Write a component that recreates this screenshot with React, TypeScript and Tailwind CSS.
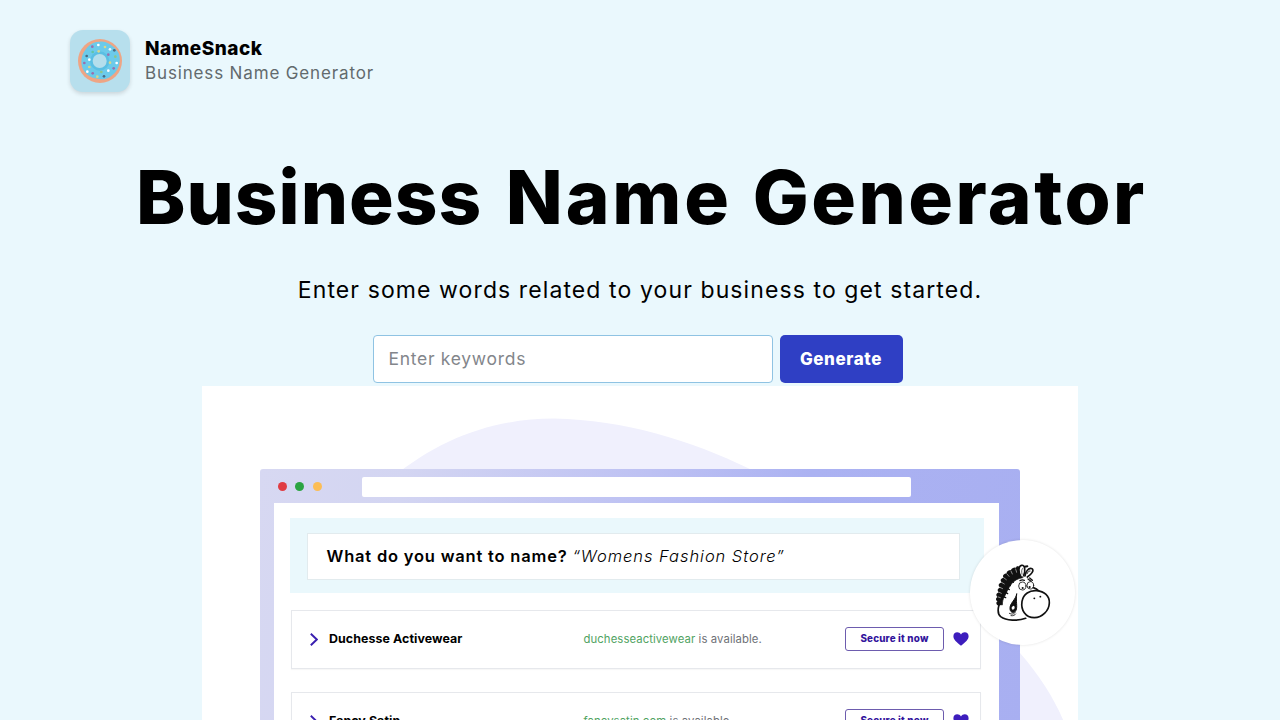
import React from "react";

type Result = { name: string; domain: string };

const RESULTS: Result[] = [
  { name: "Duchesse Activewear", domain: "duchesseactivewear" },
  { name: "Fancy Satin", domain: "fancysatin.com" },
];

const SPRINKLES: [number, number, string][] = [
  [97, 57, "#ffffff"], [79, 62, "#9a6fae"], [117, 63, "#d8d88a"], [132, 70, "#e8f7ff"],
  [145, 73, "#4b6a82"], [98, 76, "#d8d88a"], [80, 78, "#62c4a6"], [127, 86, "#9a6fae"],
  [62, 90, "#4b6a82"], [70, 101, "#ffffff"], [148, 92, "#8cc68a"], [152, 111, "#ffffff"],
  [132, 110, "#d8d88a"], [55, 111, "#9a6fae"], [70, 123, "#d8d88a"], [143, 127, "#9a6fae"],
  [64, 137, "#ffffff"], [80, 142, "#9a6fae"], [106, 138, "#8cc68a"], [127, 134, "#ffffff"],
  [94, 152, "#d8d88a"], [114, 151, "#4b6a82"],
];

const MANE: [number, number][] = [
  [83, 27], [70, 31], [57, 38], [46, 48], [39, 61], [33, 75], [30, 90], [26, 104], [25, 117], [26, 129],
];

function DonutLogo() {
  return (
    <svg className="h-full w-full" viewBox="12 12 180 186" aria-hidden="true">
      <circle cx="102" cy="105" r="66" fill="#eea585" />
      <path
        d="M101 47c18-3 32 8 43 17 14 12 19 26 17 44-2 17-10 31-24 41-13 10-24 13-39 10-17-2-31-7-41-20-11-14-12-28-10-43 2-12 9-22 17-32 9-11 22-17 37-17z"
        fill="#6ccaea"
      />
      <circle cx="101" cy="105" r="29" fill="#5abfe3" />
      <circle cx="101" cy="105" r="21" fill="#b4deec" />
      {SPRINKLES.map(([x, y, fill]) => (
        <circle key={`${x}-${y}`} cx={x} cy={y} r="4" fill={fill} />
      ))}
    </svg>
  );
}

function Zebra() {
  return (
    <svg className="h-[66px] w-16" viewBox="1 0 192 198" fill="none" stroke="#111" strokeLinecap="round" strokeLinejoin="round" aria-hidden="true">
      {/* mane */}
      <path
        d="M88 24C60 30 42 50 34 80 30 98 26 116 27 133l8 2c0-10 2-18 7-26 6-13 12-27 21-38 8-10 20-16 33-18z"
        fill="#111"
        strokeWidth="2"
      />
      {MANE.map(([x, y]) => (
        <ellipse key={`${x}-${y}`} cx={x} cy={y} rx="9" ry="7.5" fill="#111" stroke="none" transform={`rotate(-25 ${x} ${y})`} />
      ))}
      <path d="M75 27l3 10M61 33l4 9M49 42l6 7M40 54l7 5M34 68l7 4M29 83l7 3M26 97l6 3M23 111l6 2" stroke="#fff" strokeWidth="1.5" />
      {/* neck stripes */}
      <path d="M51 69l8 8M46 82l10 7M41 95l10 6M61 58l7 9M36 109l9 4" strokeWidth="4" />
      {/* ears */}
      <path d="M91 50c-9-12-8-32 2-34 10-2 12 16 6 31" fill="#fff" strokeWidth="5" />
      <path d="M94 43c-2-9-1-16 2-18" strokeWidth="2" />
      <path d="M103 48c1-13 11-26 21-22 8 5-3 18-14 25" fill="#fff" strokeWidth="5" />
      <path d="M109 41c3-6 6-8 9-8" strokeWidth="3" />
      <path d="M80 22l4 20M102 20l8-1" strokeWidth="6" />
      {/* brow */}
      <path d="M88 62c5-3 9-3 13-1M112 57l9 7M117 54l8 7" strokeWidth="4" />
      {/* eyes */}
      <ellipse cx="95" cy="78" rx="11" ry="12" fill="#fff" strokeWidth="2.5" />
      <ellipse cx="119" cy="76" rx="10" ry="11" fill="#fff" strokeWidth="2.5" />
      <circle cx="96" cy="84" r="3.2" fill="#111" stroke="none" />
      <circle cx="117" cy="81" r="3.2" fill="#111" stroke="none" />
      <path d="M128 83c7 2 12 5 17 10" strokeWidth="5" />
      {/* jaw */}
      <path d="M25 135c-4 14-3 28 5 35 16 12 52 14 75 5" strokeWidth="5" />
      {/* mouth */}
      <path d="M78 102c-2 17-22 28-20 45 1 12 13 14 18 4 5-11-1-27 2-49z" fill="#111" strokeWidth="3" />
      <path d="M70 137c-8 2-9 8-4 12 6-1 8-7 4-12z" fill="#fff" stroke="none" />
      <path d="M56 160c8 4 15 3 18-4M61 167c7 1 11-1 14-5" strokeWidth="2.5" />
      {/* muzzle */}
      <path d="M94 124c4-22 23-34 44-32 23 2 39 16 38 37-1 23-21 44-45 44-27 0-41-23-37-49z" fill="#fff" strokeWidth="5" />
      <circle cx="131" cy="115" r="2.8" fill="#111" stroke="none" />
      <circle cx="149" cy="110" r="2.8" fill="#111" stroke="none" />
    </svg>
  );
}

function Chevron() {
  return (
    <svg className="h-[13px] w-2" viewBox="0 0 8 13" fill="none" stroke="#3a1fb0" strokeWidth="1.9" aria-hidden="true">
      <path d="M.8 .8L6.8 6.5L.8 12.2" />
    </svg>
  );
}

function Heart() {
  return (
    <svg className="mb-px ml-[9px] h-[14px] w-4" viewBox="0 0 16 14" fill="#3d1dbd" aria-hidden="true">
      <path d="M8 13.800C3.600 10.200.4 7.700.4 4.300.4 1.900 2.100.3 4.200.3 5.800.3 7.200 1.100 8 2.500 8.800 1.100 10.200.3 11.800.3c2.100 0 3.800 1.600 3.800 4 0 3.400-3.200 5.900-7.600 9.500z" />
    </svg>
  );
}

function ResultRow({ name, domain }: Result) {
  return (
    <div className="flex h-[59px] w-[690px] shrink-0 items-center border border-[#e6e8ec] bg-white pl-[18px] shadow-[0_1px_1px_rgba(0,0,0,0.03)]">
      <Chevron />
      <div className="ml-[11px] w-[254.5px] text-[12.4px] font-bold tracking-[0.08px] text-black">{name}</div>
      <div className="w-[261.5px] whitespace-nowrap text-[11.3px] tracking-[0.1px] text-[#6f7177]">
        <span className="text-[#51a362]">{domain}</span> is available.
      </div>
      <div className="mb-px flex h-6 w-[99px] items-center justify-center rounded-[3px] border border-[#6d5cae] pt-px text-[9.8px] font-extrabold tracking-[0.2px] whitespace-nowrap text-[#32149c]">
        Secure it now
      </div>
      <Heart />
    </div>
  );
}

function BrowserMockup() {
  return (
    <div className="flex h-[300px] w-[760px] shrink-0 flex-col rounded-t-[3px] bg-[linear-gradient(100deg,#d7d8f2_0%,#d3d5f2_18%,#bdc1f3_48%,#abb2f2_68%,#a8aff1_100%)]">
      <div className="flex h-[33.5px] shrink-0 items-center pt-0.5 pl-[17.5px]">
        <div className="flex w-[84px] gap-[8.7px]">
          <span className="h-[9px] w-[9px] rounded-full bg-[#e03c43]" />
          <span className="h-[9px] w-[9px] rounded-full bg-[#2ba442]" />
          <span className="h-[9px] w-[9px] rounded-full bg-[#fcbd55]" />
        </div>
        <div className="h-[19.5px] w-[549px] rounded-[2px] bg-white" />
      </div>
      <div className="ml-[13.5px] flex w-[725px] grow flex-col overflow-hidden bg-white pt-[15px] pl-[16.5px]">
        <div className="flex h-[75px] w-[693.5px] shrink-0 items-center bg-[#eaf8fc] pt-0.5 pl-[17px]">
          <div className="flex h-[47px] w-[653px] items-center border border-[#e2ebee] bg-white pl-[18.5px] text-[16.5px] whitespace-nowrap text-black">
            <span className="w-[246px] font-semibold tracking-[0.8px]">What do you want to name?</span>
            <span className="font-light tracking-[0.95px] italic">“Womens Fashion Store”</span>
          </div>
        </div>
        <div className="mt-[17.5px] ml-px flex flex-col gap-[23px]">
          {RESULTS.map((r) => (
            <ResultRow key={r.name} {...r} />
          ))}
        </div>
      </div>
    </div>
  );
}

export default function App() {
  return (
    <div className="flex h-[720px] w-[1280px] flex-col overflow-hidden bg-[#eaf8fd] font-['Inter','Liberation_Sans',sans-serif] text-black">
      <header className="flex h-[92px] shrink-0 pt-[30px] pl-[70px]">
        <div className="h-[62px] w-[60px] overflow-hidden rounded-[13px] bg-[#b7dfed] shadow-[0_2px_4px_rgba(0,0,0,0.14)]">
          <DonutLogo />
        </div>
        <div className="ml-[15px] flex flex-col pt-[6px]">
          <div className="text-[19px] leading-[25px] font-extrabold tracking-[0.5px]">NameSnack</div>
          <div className="text-[17px] leading-[25px] tracking-[0.85px] text-[#626a6d]">Business Name Generator</div>
        </div>
      </header>

      <main className="flex grow flex-col items-center">
        <h1 className="mt-[55px] h-[100px] w-full pl-[136px] text-[74.5px] leading-[100px] font-extrabold tracking-[4.6px] whitespace-nowrap">
          <span className="tracking-[1px]">Business</span> <span className="ml-[2.8px] tracking-[2.8px]">Name</span>{" "}
          <span className="tracking-[2.5px]">Generator</span>
        </h1>
        <p className="mt-[28px] h-[30px] text-[23px] leading-[30px] tracking-[1.1px] whitespace-nowrap">
          Enter some words related to your business to get started.
        </p>
        <div className="mt-[30px] mr-[5px] flex h-12 w-[530px] shrink-0 justify-between">
          <input
            className="h-12 w-[400px] rounded-[4px] border border-[#8fc3e3] bg-white px-[15px] pb-0.5 text-[17.5px] tracking-[0.7px] outline-none placeholder:text-[#83868b]"
            placeholder="Enter keywords"
          />
          <button className="h-12 w-[123px] rounded-[5px] bg-[#2f3fc4] pt-0.5 text-[17px] font-extrabold tracking-[0.6px] text-white">
            Generate
          </button>
        </div>

        <section className="relative mt-[3px] flex h-[334px] w-[876px] shrink-0 items-start overflow-hidden bg-white pt-[83px] pl-[58px]">
          <svg className="absolute top-0 left-0 h-[334px] w-[876px]" viewBox="202 386 876 334" fill="#f0f0fd" aria-hidden="true">
            <path d="M392 478C440 438 495 418.500 554 418.500C625 420 690 440 750 469C860 520 960 590 1020 653C1040 676 1054 698 1064 722L392 722Z" />
          </svg>
          <div className="relative">
            <BrowserMockup />
          </div>
          <div className="absolute top-[154px] left-[768px] flex h-[105px] w-[105px] items-center justify-center rounded-full bg-white shadow-[0_0_3px_rgba(0,0,0,0.12)]">
            <Zebra />
          </div>
        </section>
      </main>
    </div>
  );
}
